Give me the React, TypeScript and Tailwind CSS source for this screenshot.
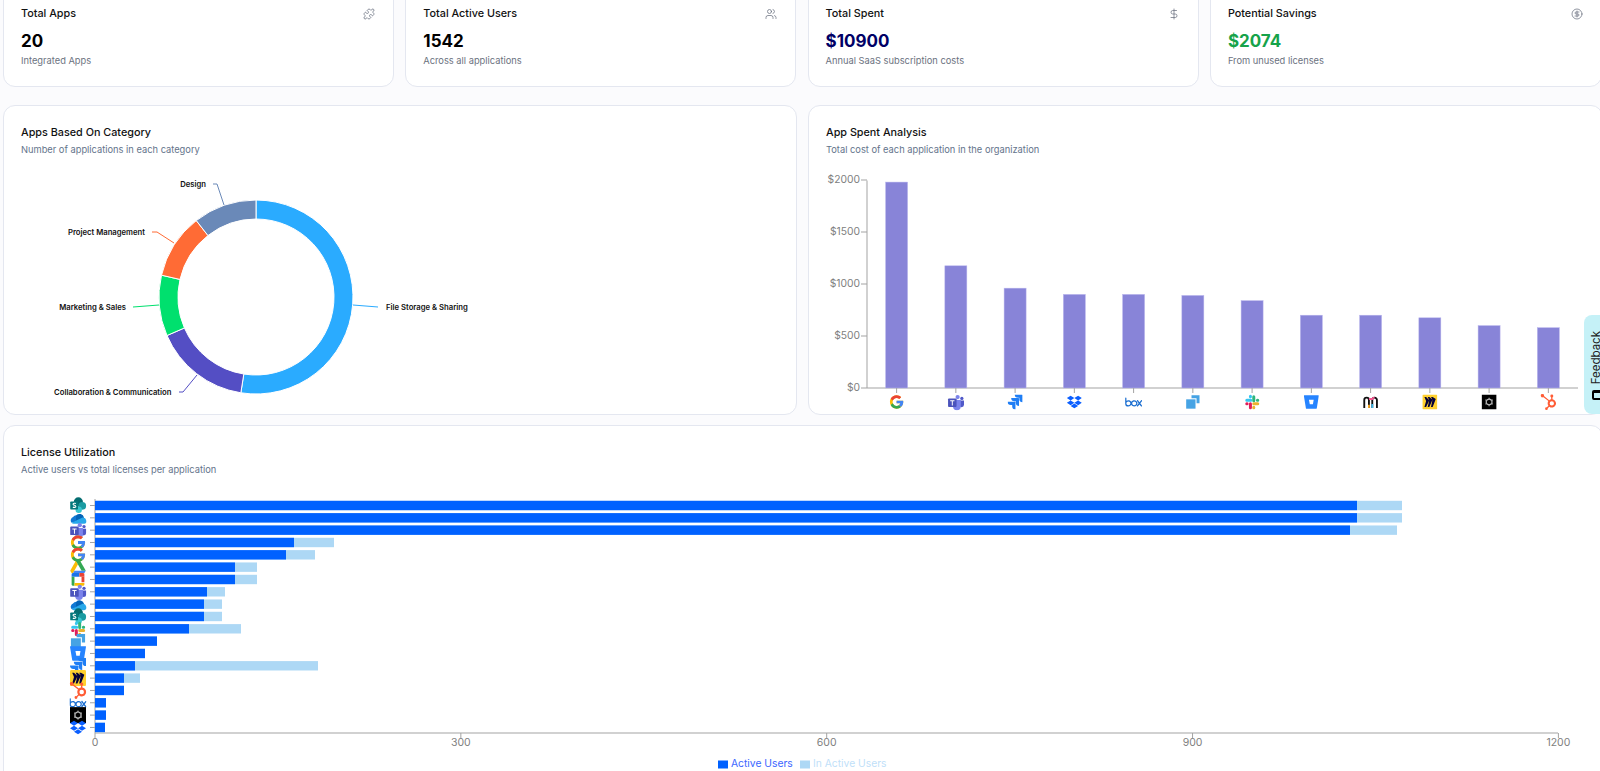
import { CircleDollarSign, DollarSign, Puzzle, Users } from "lucide-react";
import { SiBitbucket, SiBox, SiDropbox, SiHubspot, SiJira } from "react-icons/si";
import type { ReactNode } from "react";

const font = "[font-family:Inter,'Liberation_Sans',sans-serif]";
const cardClass = "rounded-xl border border-[#e4e7f0] bg-white";

const stats = [
  { title: "Total Apps", value: "20", note: "Integrated Apps", color: "text-black", icon: Puzzle },
  { title: "Total Active Users", value: "1542", note: "Across all applications", color: "text-black", icon: Users },
  { title: "Total Spent", value: "$10900", note: "Annual SaaS subscription costs", color: "text-[#000066]", icon: DollarSign },
  { title: "Potential Savings", value: "$2074", note: "From unused licenses", color: "text-[#16a34a]", icon: CircleDollarSign },
];

type Logo = (x: number, y: number, s: number) => ReactNode;

function box(x: number, y: number, s: number, body: ReactNode, vb = "0 0 24 24") {
  return (
    <svg x={x - s / 2} y={y - s / 2} width={s} height={s} viewBox={vb}>
      {body}
    </svg>
  );
}

const google: Logo = (x, y, s) =>
  box(
    x,
    y,
    s,
    <>
      <path fill="#FBBC05" d="M43.6 20H24v8h11.3C33.7 32.7 29.2 36 24 36c-6.6 0-12-5.4-12-12s5.4-12 12-12c3 0 5.8 1.2 8 3l5.6-5.6C34 6.100 29.300 4 24 4 13 4 4 13 4 24s9 20 20 20 20-9 20-20c0-1.300-.1-2.700-.4-4z" />
      <path fill="#EA4335" d="M6.300 14.700l6.600 4.800C14.700 15.100 19 12 24 12c3 0 5.800 1.200 8 3l5.600-5.600C34 6.100 29.300 4 24 4 16.300 4 9.700 8.300 6.300 14.700z" />
      <path fill="#34A853" d="M24 44c5.200 0 9.900-2 13.400-5.200l-6.200-5.200C29.200 35.100 26.700 36 24 36c-5.200 0-9.600-3.300-11.300-7.900l-6.500 5C9.500 39.600 16.200 44 24 44z" />
      <path fill="#4285F4" d="M43.600 20H24v8h11.300c-.8 2.200-2.200 4.200-4.100 5.600l6.200 5.200C37 39.200 44 34 44 24c0-1.300-.1-2.700-.4-4z" />
    </>,
    "0 0 48 48",
  );

const teams: Logo = (x, y, s) =>
  box(
    x,
    y,
    s,
    <>
      <circle cx="14.500" cy="5" r="3" fill="#7B83EB" />
      <circle cx="20.500" cy="7" r="2.300" fill="#5059C9" />
      <path fill="#5059C9" d="M16 10h7.500v6a3.500 3.500 0 0 1-7 0z" />
      <path fill="#7B83EB" d="M8 9h11v9a5.500 5.500 0 0 1-11 0z" />
      <rect x="1" y="7" width="12" height="12" rx="1.200" fill="#4B53BC" />
      <path fill="#fff" d="M4 9.500h6v1.400H7.700V17H6.300v-6.100H4z" />
    </>,
  );

const jira: Logo = (x, y, s) => <SiJira x={x - s / 2} y={y - s / 2} size={s} color="#1f7ef5" />;
const dropbox: Logo = (x, y, s) => <SiDropbox x={x - s / 2} y={y - s / 2} size={s} color="#0b5fff" />;
const boxLogo: Logo = (x, y, s) => <SiBox x={x - s / 2} y={y - s / 2} size={s} color="#1c6fd1" />;
const bitbucket: Logo = (x, y, s) => <SiBitbucket x={x - s / 2} y={y - s / 2} size={s} color="#2684ff" />;
const hubspot: Logo = (x, y, s) => <SiHubspot x={x - s / 2} y={y - s / 2} size={s} color="#ff5c35" />;

const squares: Logo = (x, y, s) =>
  box(
    x,
    y,
    s,
    <>
      <rect x="2" y="8" width="14" height="14" fill="#46a3e4" />
      <path fill="#46a3e4" d="M10 2h12v12h-4.500V6.500H10z" />
    </>,
  );

const slack: Logo = (x, y, s) =>
  box(
    x,
    y,
    s,
    <g strokeWidth="4.500" strokeLinecap="round" fill="none">
      <path stroke="#36C5F0" d="M4 9.500h6M9.500 3.500v.5" />
      <path stroke="#2EB67D" d="M14.500 4v6M20 9.500h.5" />
      <path stroke="#ECB22E" d="M14.500 14.500h6M14.500 20v.5" />
      <path stroke="#E01E5A" d="M9.500 14.500v6M4 14.500h.5" />
    </g>,
  );

const arches: Logo = (x, y, s) =>
  box(
    x,
    y,
    s,
    <g strokeWidth="2.800" fill="none">
      <path stroke="#111" d="M2.500 21V9a3.500 3.500 0 0 1 7 0v12" />
      <path stroke="#111" d="M14.500 21V9a3.500 3.500 0 0 1 7 0v12" />
      <path stroke="#f0568f" d="M14.500 9a3.500 3.500 0 0 1 3.500-3.500" />
      <path stroke="#f0568f" d="M9.500 7.500h5" />
      <path stroke="#f5a623" d="M9.500 21v-5" />
      <path stroke="#3fb8e8" d="M14.500 21v-6" />
    </g>,
  );

const miro: Logo = (x, y, s) =>
  box(
    x,
    y,
    s,
    <>
      <rect width="24" height="24" rx="2" fill="#FFD02F" />
      <path fill="#050038" d="M16.500 4h-2.700l2.400 4-5-4H8.500l2.500 5-5-5H3.300l2.700 6.500L3.300 20H6l5-10.500L8.500 20h2.700l5-11.500L13.800 20h2.700l5-13z" />
    </>,
  );

const blackBox: Logo = (x, y, s) =>
  box(
    x,
    y,
    s,
    <>
      <rect width="24" height="24" fill="#000" />
      <path fill="none" stroke="#bbb" strokeWidth="2" d="M12 7l4.500 2.500v5L12 17l-4.500-2.500v-5z" />
      <path stroke="#999" strokeWidth="1.500" d="M12 5v2M12 17v2M6 8.500l1.700 1M16.300 14.500l1.700 1M6 15.500l1.700-1M16.300 9.500l1.700-1" />
    </>,
  );

const oneDrive: Logo = (x, y, s) =>
  box(
    x,
    y,
    s,
    <>
      <path fill="#0364B8" d="M9.500 8.500a6.500 6.500 0 0 1 11 3l-6 6.500H3z" />
      <path fill="#0F78D4" d="M9.500 8.500A6 6 0 0 0 5 11a5 5 0 0 0-2 8l6-2z" />
      <path fill="#28A8EA" d="M3 19a3.500 3.500 0 0 0 3 1.500h14.500a3.500 3.500 0 0 0 3-5.500 4.500 4.500 0 0 0-5-3.500z" />
    </>,
  );

const sharePoint: Logo = (x, y, s) =>
  box(
    x,
    y,
    s,
    <>
      <circle cx="12.500" cy="7" r="6.500" fill="#036C70" />
      <circle cx="18" cy="12.500" r="5.500" fill="#1A9BA1" />
      <circle cx="13" cy="18" r="4.500" fill="#37C6D0" />
      <rect x="1" y="6.500" width="11" height="11" rx="1" fill="#03787C" />
      <path fill="none" stroke="#fff" strokeWidth="1.500" d="M9 9.200c-1-.7-4-.7-4 1 0 1.800 4 1.200 4 3.100 0 1.600-3 1.700-4.200.8" />
    </>,
  );

const workspace: Logo = (x, y, s) =>
  box(
    x,
    y,
    s,
    <>
      <rect x="3" y="3" width="18" height="18" fill="#fff" />
      <path fill="#1A73E8" d="M3 8V5a2 2 0 0 1 2-2h9v5z" />
      <path fill="#EA4335" d="M14 3h5a2 2 0 0 1 2 2v3h-7z" />
      <path fill="#34A853" d="M3 8h4v13H5a2 2 0 0 1-2-2z" />
      <path fill="#EA4335" d="M17 8h4v8h-4z" />
      <path fill="#FBBC05" d="M7 17h14v2a2 2 0 0 1-2 2H7z" />
    </>,
  );

const drive: Logo = (x, y, s) =>
  box(
    x,
    y,
    s,
    <>
      <path fill="#FBBC05" d="M9 3l-8 14 3 5 8-14z" />
      <path fill="#34A853" d="M15 3H9l8 14h6z" />
      <path fill="#4285F4" d="M4 22h16l3-5H7z" />
    </>,
  );

const spend: { value: number; logo: Logo; size: number }[] = [
  { value: 1980, logo: google, size: 16 },
  { value: 1175, logo: teams, size: 17 },
  { value: 960, logo: jira, size: 15 },
  { value: 900, logo: dropbox, size: 15 },
  { value: 900, logo: boxLogo, size: 17 },
  { value: 890, logo: squares, size: 16 },
  { value: 840, logo: slack, size: 16 },
  { value: 700, logo: bitbucket, size: 15 },
  { value: 700, logo: arches, size: 16 },
  { value: 675, logo: miro, size: 15 },
  { value: 600, logo: blackBox, size: 15 },
  { value: 580, logo: hubspot, size: 16 },
];

const licenses: { active: number; total: number; logo: Logo; size: number }[] = [
  { active: 1357, total: 1402, logo: sharePoint, size: 17 },
  { active: 1357, total: 1402, logo: oneDrive, size: 17 },
  { active: 1350, total: 1397, logo: teams, size: 17 },
  { active: 294, total: 334, logo: google, size: 17 },
  { active: 286, total: 315, logo: google, size: 17 },
  { active: 235, total: 257, logo: drive, size: 17 },
  { active: 235, total: 257, logo: workspace, size: 17 },
  { active: 207, total: 225, logo: teams, size: 17 },
  { active: 204, total: 222, logo: oneDrive, size: 17 },
  { active: 204, total: 222, logo: sharePoint, size: 17 },
  { active: 189, total: 241, logo: slack, size: 16 },
  { active: 157, total: 157, logo: squares, size: 17 },
  { active: 145, total: 145, logo: bitbucket, size: 16 },
  { active: 135, total: 318, logo: jira, size: 16 },
  { active: 124, total: 140, logo: miro, size: 16 },
  { active: 124, total: 124, logo: hubspot, size: 17 },
  { active: 106, total: 106, logo: boxLogo, size: 17 },
  { active: 106, total: 106, logo: blackBox, size: 16 },
  { active: 105, total: 105, logo: dropbox, size: 16 },
];

// donut: centre 256,297
function arc(from: number, to: number) {
  const R = 97;
  const r = 78;
  const pt = (a: number, rad: number) => {
    const t = (a * Math.PI) / 180;
    return `${(256 + rad * Math.sin(t)).toFixed(2)} ${(297 - rad * Math.cos(t)).toFixed(2)}`;
  };
  const large = to - from > 180 ? 1 : 0;
  return `M${pt(from, R)}A${R} ${R} 0 ${large} 1 ${pt(to, R)}L${pt(to, r)}A${r} ${r} 0 ${large} 0 ${pt(from, r)}Z`;
}

const slices = [
  { from: 0, to: 189, color: "#2aabff", line: "353,305 378,307", label: "File Storage & Sharing", x: 386, y: 307.5, anchor: "start" },
  { from: 189, to: 246.6, color: "#544ec4", line: "197,375 183,392 179,392", label: "Collaboration & Communication", x: 171.5, y: 393, anchor: "end" },
  { from: 246.6, to: 283, color: "#00e06e", line: "159,305 133,307", label: "Marketing & Sales", x: 126, y: 307.5, anchor: "end" },
  { from: 283, to: 322, color: "#ff6b35", line: "174,243 157,232 152,232", label: "Project Management", x: 145, y: 233, anchor: "end" },
  { from: 322, to: 360, color: "#6a89b8", line: "224,205 217,184 213,184", label: "Design", x: 206, y: 185, anchor: "end" },
];

function CardHead({ title, note }: { title: string; note: string }) {
  return (
    <div className="px-[17px] pt-[18px]">
      <h2 className="text-[10.8px] leading-[18px] font-medium text-[#111]">{title}</h2>
      <p className="mt-[1px] text-[9.3px] leading-[14px] text-[#64748b]">{note}</p>
    </div>
  );
}

export default function App() {
  return (
    <div className={`relative h-[771px] w-[1600px] overflow-hidden bg-[#fbfbfd] ${font}`}>
      <div className="-mt-[20px] ml-[3px] w-[1600px]">
        <div className="grid grid-cols-[391px_391px_391px_392px] gap-[11.3px]">
          {stats.map((s) => {
            const Icon = s.icon;
            return (
              <div key={s.title} className={`${cardClass} h-[107px] pr-[18px] pl-[17px] pt-[24px]`}>
                <div className="flex items-center justify-between">
                  <span className="text-[10.8px] leading-[18px] font-medium text-[#111]">{s.title}</span>
                  <Icon size={12} strokeWidth={1.5} className="text-[#6b7280]" />
                </div>
                <div className={`mt-[5px] text-[17px] leading-[26px] font-bold ${s.color}`}>{s.value}</div>
                <div className="text-[9.3px] leading-[14px] text-[#6b7280]">{s.note}</div>
              </div>
            );
          })}
        </div>

        <div className="mt-[18px] grid grid-cols-[794px_795px] gap-[11px]">
          <section className={cardClass}>
            <CardHead title="Apps Based On Category" note="Number of applications in each category" />
            <svg viewBox="21 160 770 254" width="770" height="254" className="mt-[3px] ml-[17px] block">
              {slices.map((s) => (
                <g key={s.label}>
                  <path d={arc(s.from, s.to)} fill={s.color} stroke="#fff" strokeWidth="1" />
                  <polyline points={s.line} fill="none" stroke={s.color} strokeWidth="1" />
                  <text
                    x={s.x}
                    y={s.y}
                    textAnchor={s.anchor as "start" | "end"}
                    dominantBaseline="middle"
                    fontSize="7.700"
                    fontWeight="600"
                    fill="#111"
                  >
                    {s.label}
                  </text>
                </g>
              ))}
            </svg>
          </section>

          <section className={`${cardClass} bg-[#fcfcfc]`}>
            <CardHead title="App Spent Analysis" note="Total cost of each application in the organization" />
            <svg viewBox="826 160 770 254" width="770" height="254" className="mt-[3px] ml-[17px] block">
              <path d="M867 180.500V388H1578" fill="none" stroke="#a3a3a3" strokeWidth="1" />
              {[0, 500, 1000, 1500, 2000].map((v) => {
                const y = 388 - v * 0.104;
                return (
                  <g key={v}>
                    <path d={`M861 ${y}H867`} stroke="#a3a3a3" strokeWidth="1" />
                    <text x="860" y={y} textAnchor="end" dominantBaseline="middle" fontSize="10.300" fill="#808080">
                      ${v}
                    </text>
                  </g>
                );
              })}
              {spend.map((b, i) => {
                const cx = 896.6 + i * 59.25;
                const h = b.value * 0.104;
                return (
                  <g key={i}>
                    <rect x={cx - 11} y={388 - h} width="22" height={h} fill="#8884d8" stroke="#b9b6ee" strokeWidth="0.5" />
                    <path d={`M${cx} 388V393`} stroke="#a3a3a3" strokeWidth="1" />
                    {b.logo(cx, 402, b.size)}
                  </g>
                );
              })}
            </svg>
          </section>
        </div>

        <section className={`${cardClass} mt-[10px] h-[360px]`}>
          <CardHead title="License Utilization" note="Active users vs total licenses per application" />
          <svg viewBox="21 480 1570 291" width="1570" height="291" className="mt-[3px] ml-[17px] block">
            <path d="M95 499V733H1558" fill="none" stroke="#a3a3a3" strokeWidth="1" />
            {[0, 300, 600, 900, 1200].map((v) => {
              const x = 95 + v * 1.2195;
              return (
                <g key={v}>
                  <path d={`M${x} 733V738`} stroke="#a3a3a3" strokeWidth="1" />
                  <text x={x} y="743" textAnchor="middle" dominantBaseline="middle" fontSize="10.500" fill="#808080">
                    {v}
                  </text>
                </g>
              );
            })}
            {licenses.map((b, i) => {
              const y = 505.5 + i * 12.33;
              return (
                <g key={i}>
                  <rect x="95" y={y - 4.700} width={b.total - 95} height="9.400" fill="#add8f5" />
                  <rect x="95" y={y - 4.700} width={b.active - 95} height="9.400" fill="#0061ff" />
                  <path d={`M90 ${y}H95`} stroke="#a3a3a3" strokeWidth="1" />
                  {b.logo(78, y, b.size)}
                </g>
              );
            })}
            <rect x="718" y="760.500" width="10" height="8" fill="#0061ff" />
            <text x="731" y="764.500" dominantBaseline="middle" fontSize="10.300" fill="#3b66ff">
              Active Users
            </text>
            <rect x="800" y="760.500" width="10" height="8" fill="#add8f5" />
            <text x="813" y="764.500" dominantBaseline="middle" fontSize="10.300" fill="#bfdff9">
              In Active Users
            </text>
          </svg>
        </section>
      </div>

      <div className="absolute top-[315px] right-0 h-[99px] w-[16px] rounded-l-lg bg-[#c5f1f7]">
        <span className="absolute top-[16px] left-[8px] rotate-180 text-[11.5px] leading-[8px] text-[#222] [writing-mode:vertical-rl]">
          Feedback
        </span>
        <span className="absolute top-[75px] left-[8px] h-[10px] w-[10px] rounded-[2px] border-2 border-t-[3px] border-black" />
      </div>
    </div>
  );
}
